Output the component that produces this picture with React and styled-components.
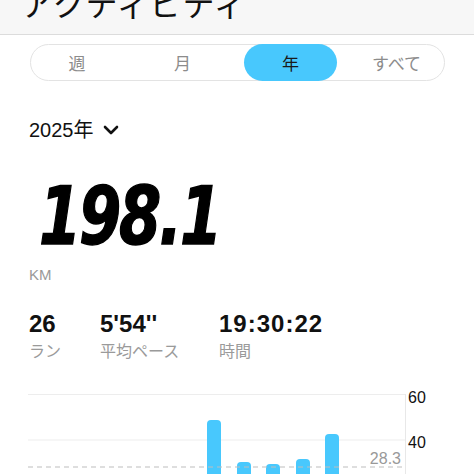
import React from 'react';
import styled, { createGlobalStyle } from 'styled-components';

const GlobalStyle = createGlobalStyle`
  html, body {
    margin: 0;
    padding: 0;
    background: #fff;
    width: 474px;
    height: 474px;
    overflow: hidden;
    font-family: "Liberation Sans", "Noto Sans CJK JP", sans-serif;
    color: #111;
  }
`;

const Header = styled.header`
  height: 34px;
  background: #f7f7f7;
  border-bottom: 1px solid #dcdcdc;
  overflow: hidden;
`;

const Title = styled.h1`
  margin: -18px 0 0 21px;
  font-family: "Noto Sans CJK JP", sans-serif;
  font-size: 32px;
  font-weight: 400;
  line-height: 40px;
  letter-spacing: 1px;
  color: #111;
`;

const Segments = styled.div`
  margin: 9px 0 0 30px;
  width: 413px;
  height: 35px;
  border: 1px solid #e3e3e3;
  border-radius: 19px;
  display: grid;
  grid-template-columns: 92px 119px 97px 1fr;
`;

const Segment = styled.div`
  display: flex;
  align-items: center;
  justify-content: center;
  margin: -1px ${p => (p.active ? '2px' : '0')};
  padding-left: ${p => p.shift || 0}px;
  border-radius: 19px;
  background: ${p => (p.active ? '#48c8fd' : 'transparent')};
  color: ${p => (p.active ? '#1a1a1a' : '#8c8c8c')};
  font-family: "Noto Sans CJK JP", sans-serif;
  font-size: 17px;
`;

const Body = styled.main`
  padding: 0 0 0 29px;
`;

const YearPicker = styled.div`
  margin-top: 37px;
  display: flex;
  align-items: center;
  gap: 9px;
  font-size: 20px;
  line-height: 24px;
`;

const Big = styled.div`
  margin: 35px 0 0 10px;
  font-family: "DejaVu Sans", sans-serif;
  font-size: 80px;
  font-weight: 800;
  font-style: italic;
  line-height: 80px;
  letter-spacing: -3px;
  transform: scaleX(0.76);
  transform-origin: left center;
  height: 80px;
  -webkit-text-stroke: 1.5px #000;
  color: #000;
`;

const Unit = styled.div`
  margin-top: 9px;
  font-size: 15px;
  color: #999;
`;

const Stats = styled.div`
  margin-top: 27px;
  display: flex;
`;

const Stat = styled.div`
  width: ${p => p.w}px;
`;

const Value = styled.div`
  font-size: 24px;
  font-weight: 700;
  line-height: 28px;
  letter-spacing: ${p => p.ls || 0}px;
`;

const Label = styled.div`
  margin-top: 1px;
  font-family: "Noto Sans CJK JP", sans-serif;
  font-size: 16px;
  line-height: 22px;
  color: #9a9a9a;
`;

const Chart = styled.svg`
  display: block;
  margin-top: 24px;
`;

const bars = [
  { x: 207, v: 48.8 },
  { x: 237, v: 30.3 },
  { x: 266, v: 29.4 },
  { x: 296, v: 31.6 },
  { x: 325, v: 42.6 },
];

const zero = 145.6;
const unit = 2.265;

function BarChart() {
  return (
    <Chart width="474" height="100" viewBox="0 0 474 100">
      <line x1="28" y1="9.5" x2="405" y2="9.5" stroke="#ededed" />
      <line x1="28" y1="55" x2="405" y2="55" stroke="#ededed" />
      <line x1="405.5" y1="9" x2="405.5" y2="100" stroke="#e8e8e8" />
      {bars.map(b => (
        <rect key={b.x} x={b.x} y={zero - b.v * unit} width="14" height="120" rx="4" fill="#48c8fd" />
      ))}
      <line x1="28" y1="82" x2="405" y2="82" stroke="#bdbdbd" strokeDasharray="5 4" />
      <text x="408" y="18" fontSize="16" fill="#111" fontFamily="Liberation Sans">60</text>
      <text x="408" y="63" fontSize="16" fill="#111" fontFamily="Liberation Sans">40</text>
      <text x="401" y="79" fontSize="16" fill="#999" fontFamily="Liberation Sans" textAnchor="end">28.3</text>
    </Chart>
  );
}

export default function App() {
  return (
    <>
      <GlobalStyle />
      <Header>
        <Title>アクティビティ</Title>
      </Header>
      <Segments>
        <Segment>週</Segment>
        <Segment>月</Segment>
        <Segment active>年</Segment>
        <Segment shift={10}>すべて</Segment>
      </Segments>
      <Body>
        <YearPicker>
          2025年
          <svg width="16" height="10" viewBox="0 0 16 10">
            <polyline points="2,2 8,8 14,2" fill="none" stroke="#111" strokeWidth="2.6" strokeLinecap="round" strokeLinejoin="round" />
          </svg>
        </YearPicker>
        <Big>198.1</Big>
        <Unit>KM</Unit>
        <Stats>
          <Stat w={71}>
            <Value>26</Value>
            <Label>ラン</Label>
          </Stat>
          <Stat w={119}>
            <Value>5'54''</Value>
            <Label>平均ペース</Label>
          </Stat>
          <Stat w={120}>
            <Value ls={1}>19:30:22</Value>
            <Label>時間</Label>
          </Stat>
        </Stats>
      </Body>
      <BarChart />
    </>
  );
}
